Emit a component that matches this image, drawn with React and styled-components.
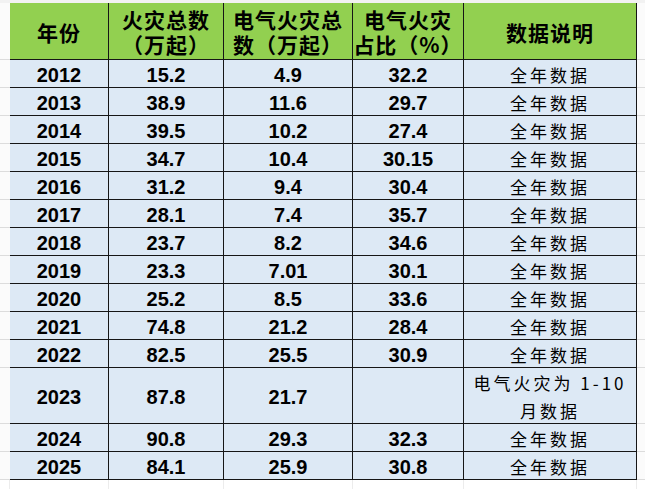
import React from 'react';
import styled, { createGlobalStyle } from 'styled-components';

const COLS = '10px 99px 115px 129px 111px 173px 1fr';

const rows = [
  ['2012', '15.2', '4.9', '32.2', '全年数据'],
  ['2013', '38.9', '11.6', '29.7', '全年数据'],
  ['2014', '39.5', '10.2', '27.4', '全年数据'],
  ['2015', '34.7', '10.4', '30.15', '全年数据'],
  ['2016', '31.2', '9.4', '30.4', '全年数据'],
  ['2017', '28.1', '7.4', '35.7', '全年数据'],
  ['2018', '23.7', '8.2', '34.6', '全年数据'],
  ['2019', '23.3', '7.01', '30.1', '全年数据'],
  ['2020', '25.2', '8.5', '33.6', '全年数据'],
  ['2021', '74.8', '21.2', '28.4', '全年数据'],
  ['2022', '82.5', '25.5', '30.9', '全年数据'],
  ['2023', '87.8', '21.7', '', 'note'],
  ['2024', '90.8', '29.3', '32.3', '全年数据'],
  ['2025', '84.1', '25.9', '30.8', '全年数据'],
];

const GlobalStyle = createGlobalStyle`
  html, body {
    margin: 0;
    padding: 0;
    background: #ffffff;
  }
  body {
    width: 645px;
    height: 489px;
    overflow: hidden;
  }
`;

const Sheet = styled.div`
  width: 645px;
  height: 489px;
  display: flex;
  flex-direction: column;
  background: #ffffff;
`;

const TopStrip = styled.div`
  height: 3px;
  flex: none;
  background: #f2f2f2;
`;

const Row = styled.div`
  display: grid;
  grid-template-columns: ${COLS};
  grid-template-rows: ${p => p.h}px;
  height: ${p => p.h}px;
  flex: none;
`;

const Gutter = styled.div`
  border-bottom: 1px solid #dcdcdc;
  background: #fbfbfb;
`;

const Cell = styled.div`
  box-sizing: border-box;
  overflow: hidden;
  display: flex;
  flex-direction: column;
  align-items: center;
  justify-content: center;
  padding-top: ${p => (p.head ? 2 : 3)}px;
  border-right: 1px solid #161616;
  border-bottom: 1px solid #161616;
  background: ${p => (p.head ? '#92d050' : '#dde9f5')};
  color: #000;
  font-family: ${p =>
    p.cjk
      ? '"Noto Sans CJK SC", "Noto Sans", sans-serif'
      : '"Liberation Sans", Arial, sans-serif'};
  font-weight: ${p => (p.light ? 400 : 700)};
  font-size: ${p => (p.head ? 21 : p.light ? 17 : 20)}px;
  letter-spacing: ${p => (p.head ? 1 : p.light ? 3 : 0)}px;
  line-height: ${p => (p.head ? 25 : 24)}px;
  white-space: nowrap;
  text-align: center;
`;

const Note = styled.span`
  display: block;
  line-height: 28px;
`;

const Tail = styled.div`
  flex: 1;
  display: grid;
  grid-template-columns: ${COLS};
`;

const TailCol = styled.div`
  border-right: 1px solid #ececec;
`;

const App = () => (
  <Sheet>
    <GlobalStyle />
    <TopStrip />
    <Row h={57}>
      <Gutter />
      <Cell head cjk>年份</Cell>
      <Cell head cjk>
        <span>火灾总数</span>
        <span>（万起）</span>
      </Cell>
      <Cell head cjk>
        <span>电气火灾总</span>
        <span>数（万起）</span>
      </Cell>
      <Cell head cjk>
        <span>电气火灾</span>
        <span>占比（%）</span>
      </Cell>
      <Cell head cjk>数据说明</Cell>
      <Gutter />
    </Row>
    {rows.map(r => (
      <Row key={r[0]} h={r[4] === 'note' ? 56 : 28}>
        <Gutter />
        <Cell>{r[0]}</Cell>
        <Cell>{r[1]}</Cell>
        <Cell>{r[2]}</Cell>
        <Cell>{r[3]}</Cell>
        {r[4] === 'note' ? (
          <Cell cjk light>
            <Note>电气火灾为 1-10</Note>
            <Note>月数据</Note>
          </Cell>
        ) : (
          <Cell cjk light>{r[4]}</Cell>
        )}
        <Gutter />
      </Row>
    ))}
    <Tail>
      <TailCol />
      <TailCol />
      <TailCol />
      <TailCol />
      <TailCol />
      <TailCol />
      <div />
    </Tail>
  </Sheet>
);

export default App;
